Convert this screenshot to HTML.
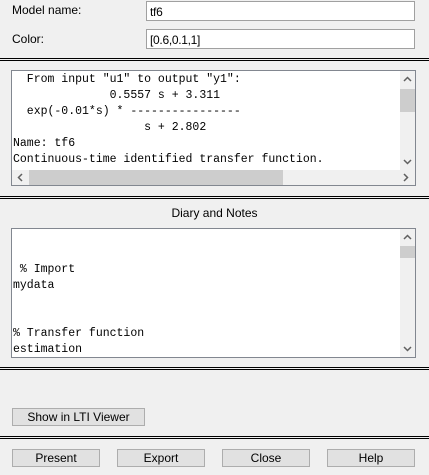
<!DOCTYPE html>
<html><head><style>
body{margin:0;width:429px;height:475px;background:#f0f0f0;position:relative;overflow:hidden;font-family:"Liberation Sans",Arial,sans-serif;font-size:12px;color:#000}
.a{position:absolute}
.sep{position:absolute;left:0;width:429px;height:1px;background:#000}
.in{position:absolute;background:#fff;border:1px solid #a0a0a0;box-sizing:border-box;font-size:12px;padding:3px 0 0 3px;letter-spacing:-0.3px}
.box{position:absolute;background:#fff;border:1px solid #828790;box-sizing:border-box;overflow:hidden}
.mono{font-family:"Liberation Mono","Courier New",monospace;font-size:11.5px;line-height:16px;white-space:pre;position:absolute;left:1px}
.vs{position:absolute;right:0;top:0;width:15px;background:#f0f0f0}
.th{position:absolute;background:#cdcdcd}
svg.ar{position:absolute;width:15px;height:15px}
.btn{position:absolute;height:18px;background:#e1e1e1;border:1px solid #adadad;box-sizing:border-box;text-align:center;font-size:12px;line-height:16px}
</style></head><body>
<div class="a" style="left:12px;top:3px">Model name:</div>
<div class="in" style="left:146px;top:1px;width:269px;height:20px">tf6</div>
<div class="a" style="left:12px;top:32px">Color:</div>
<div class="in" style="left:146px;top:29px;width:269px;height:20px">[0.6,0.1,1]</div>
<div class="sep" style="top:58px"></div><div class="sep" style="top:60px"></div>

<div class="box" style="left:11px;top:70px;width:405px;height:116px">
<div class="mono" style="top:1px">  From input "u1" to output "y1":
              0.5557 s + 3.311
  exp(-0.01*s) * ----------------
                   s + 2.802
Name: tf6
Continuous-time identified transfer function.</div>
<div class="vs" style="height:99px"><div class="th" style="left:0;top:18px;width:15px;height:23px"></div>
<svg class="ar" style="left:0;top:1px" viewBox="0 0 15 15"><path d="M4 9 L7.5 5.5 L11 9" fill="none" stroke="#606060" stroke-width="1.5"/></svg>
<svg class="ar" style="left:0;top:83px" viewBox="0 0 15 15"><path d="M4 6 L7.5 9.5 L11 6" fill="none" stroke="#606060" stroke-width="1.5"/></svg></div>
<div class="a" style="left:0;top:99px;width:403px;height:15px;background:#f0f0f0">
<div class="th" style="left:17px;top:0;width:254px;height:15px"></div>
<svg class="ar" style="left:1px;top:0" viewBox="0 0 15 15"><path d="M9 4 L5.5 7.5 L9 11" fill="none" stroke="#606060" stroke-width="1.5"/></svg>
<svg class="ar" style="left:386px;top:0" viewBox="0 0 15 15"><path d="M6 4 L9.5 7.5 L6 11" fill="none" stroke="#606060" stroke-width="1.5"/></svg></div>
</div>

<div class="sep" style="top:196px"></div><div class="sep" style="top:198px"></div>
<div class="a" style="left:0;width:429px;top:206px;text-align:center">Diary and Notes</div>
<div class="box" style="left:11px;top:228px;width:405px;height:130px">
<div class="mono" style="top:33px"> % Import
mydata


% Transfer function
estimation</div>
<div class="vs" style="height:128px"><div class="th" style="left:0;top:17px;width:15px;height:12px"></div>
<svg class="ar" style="left:0;top:1px" viewBox="0 0 15 15"><path d="M4 9 L7.5 5.5 L11 9" fill="none" stroke="#606060" stroke-width="1.5"/></svg>
<svg class="ar" style="left:0;top:112px" viewBox="0 0 15 15"><path d="M4 6 L7.5 9.5 L11 6" fill="none" stroke="#606060" stroke-width="1.5"/></svg></div>
</div>
<div class="sep" style="top:367px"></div><div class="sep" style="top:369px"></div>
<div class="btn" style="left:12px;top:408px;width:133px">Show in LTI Viewer</div>
<div class="sep" style="top:436px"></div><div class="sep" style="top:438px"></div>
<div class="btn" style="left:12px;top:449px;width:88px">Present</div>
<div class="btn" style="left:117px;top:449px;width:88px">Export</div>
<div class="btn" style="left:222px;top:449px;width:88px">Close</div>
<div class="btn" style="left:327px;top:449px;width:88px">Help</div>
</body></html>
